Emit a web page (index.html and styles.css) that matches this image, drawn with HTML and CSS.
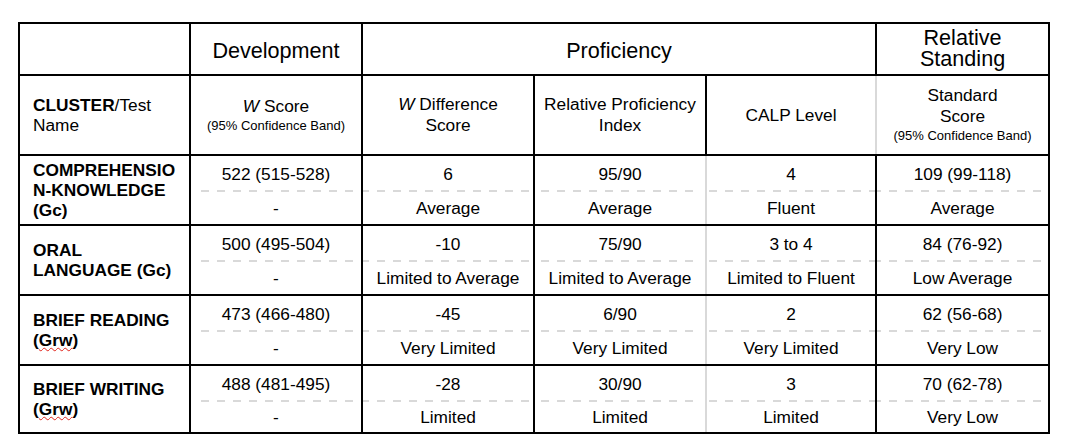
FILE: index.html
```html
<!DOCTYPE html>
<html lang="en">
<head>
<meta charset="utf-8">
<title>Cluster Scores</title>
<link rel="stylesheet" href="styles.css">
</head>
<body>
<div class="page">
<table class="report">
  <colgroup>
    <col class="c1"><col class="c2"><col class="c3"><col class="c4"><col class="c5"><col class="c6">
  </colgroup>
  <tr class="h1">
    <th></th>
    <th class="dev">Development</th>
    <th colspan="3" class="prof">Proficiency</th>
    <th class="rel">Relative<br>Standing</th>
  </tr>
  <tr class="h2">
    <th class="name"><b>CLUSTER</b>/Test Name</th>
    <th><i>W</i> Score<span class="band">(95% Confidence Band)</span></th>
    <th><i>W</i> Difference<br>Score</th>
    <th>Relative Proficiency<br>Index</th>
    <th class="calp">CALP Level</th>
    <th class="ss">Standard<br>Score<span class="band">(95% Confidence Band)</span></th>
  </tr>

  <tr class="s1">
    <td class="name" rowspan="2">COMPREHENSIO<wbr>N-KNOWLEDGE (Gc)</td>
    <td class="top d2">522 (515-528)</td>
    <td class="top d3">6</td>
    <td class="top d4">95/90</td>
    <td class="top d5">4</td>
    <td class="top d6">109 (99-118)</td>
  </tr>
  <tr class="s2">
    <td class="bot">-</td>
    <td class="bot">Average</td>
    <td class="bot d4">Average</td>
    <td class="bot d5">Fluent</td>
    <td class="bot">Average</td>
  </tr>

  <tr class="s1">
    <td class="name" rowspan="2">ORAL<br>LANGUAGE (Gc)</td>
    <td class="top d2">500 (495-504)</td>
    <td class="top d3">-10</td>
    <td class="top d4">75/90</td>
    <td class="top d5">3 to 4</td>
    <td class="top d6">84 (76-92)</td>
  </tr>
  <tr class="s2">
    <td class="bot">-</td>
    <td class="bot">Limited to Average</td>
    <td class="bot d4">Limited to Average</td>
    <td class="bot d5">Limited to Fluent</td>
    <td class="bot">Low Average</td>
  </tr>

  <tr class="s1">
    <td class="name" rowspan="2">BRIEF READING (<span class="sp">Grw</span>)</td>
    <td class="top d2">473 (466-480)</td>
    <td class="top d3">-45</td>
    <td class="top d4">6/90</td>
    <td class="top d5">2</td>
    <td class="top d6">62 (56-68)</td>
  </tr>
  <tr class="s2">
    <td class="bot">-</td>
    <td class="bot">Very Limited</td>
    <td class="bot d4">Very Limited</td>
    <td class="bot d5">Very Limited</td>
    <td class="bot">Very Low</td>
  </tr>

  <tr class="s1">
    <td class="name" rowspan="2">BRIEF WRITING (<span class="sp">Grw</span>)</td>
    <td class="top d2">488 (481-495)</td>
    <td class="top d3">-28</td>
    <td class="top d4">30/90</td>
    <td class="top d5">3</td>
    <td class="top d6">70 (62-78)</td>
  </tr>
  <tr class="s2 last">
    <td class="bot">-</td>
    <td class="bot">Limited</td>
    <td class="bot d4">Limited</td>
    <td class="bot d5">Limited</td>
    <td class="bot">Very Low</td>
  </tr>
</table>
</div>
</body>
</html>
```

FILE: styles.css
```css
* { box-sizing: border-box; }

html, body {
  margin: 0;
  background: #ffffff;
}

body {
  font-family: "Liberation Sans", Arial, Helvetica, sans-serif;
  color: #000000;
}

.page {
  padding: 22px 0 0 18px;
}

.report {
  border-collapse: collapse;
  table-layout: fixed;
  width: 1030px;
  font-size: 17.3px;
  line-height: 1.2;
}

.c1 { width: 171px; }
.c2 { width: 172px; }
.c3 { width: 172px; }
.c4 { width: 172px; }
.c5 { width: 170px; }
.c6 { width: 173px; }

.report th,
.report td {
  border: 2px solid #000000;
  padding: 0;
  text-align: center;
  vertical-align: middle;
  font-weight: normal;
}

.h1 { height: 52px; }
.h1 th {
  font-size: 21.6px;
  line-height: 21px;
}
.h1 .dev,
.h1 .prof { padding-top: 3px; }
.h1 .rel { padding-bottom: 2px; }

.h2 { height: 80px; }
.h2 th { line-height: 21px; }

.band {
  display: block;
  font-size: 13px;
  line-height: 18px;
}

.report .name {
  text-align: left;
  padding: 0 2px 0 13px;
  line-height: 20px;
}

td.name { font-weight: bold; }

.s1 { height: 37px; }
.s2 { height: 33px; }
.s2.last { height: 31px; }

.report td.top {
  border-bottom: none;
  background-image: repeating-linear-gradient(to right, #d9d9d9 0 8px, transparent 8px 16px);
  background-repeat: no-repeat;
  background-size: 100% 2px;
  background-position: 0 100%;
}
.report td.top.d2 { background-position: 10px 100%; }
.report td.top.d3 { background-position: -2px 100%; }
.report td.top.d4 { background-position: -10px 100%; }
.report td.top.d5 { background-position: 2px 100%; }
.report td.top.d6 { background-position: -4px 100%; }

.report td.bot { border-top: none; }

.report .d4 { border-right-color: #d9d9d9; }
.report .d5 { border-left-color: #d9d9d9; }
.h2 .calp { border-left-color: #000000; border-right-color: #d9d9d9; }
.h2 .ss { border-left-color: #000000; }
.h2 .calp + .ss { border-left-color: #000000; }

.sp {
  text-decoration: underline wavy #e0241c;
  text-decoration-skip-ink: none;
  text-underline-offset: 1px;
  text-decoration-thickness: 1px;
}
```
